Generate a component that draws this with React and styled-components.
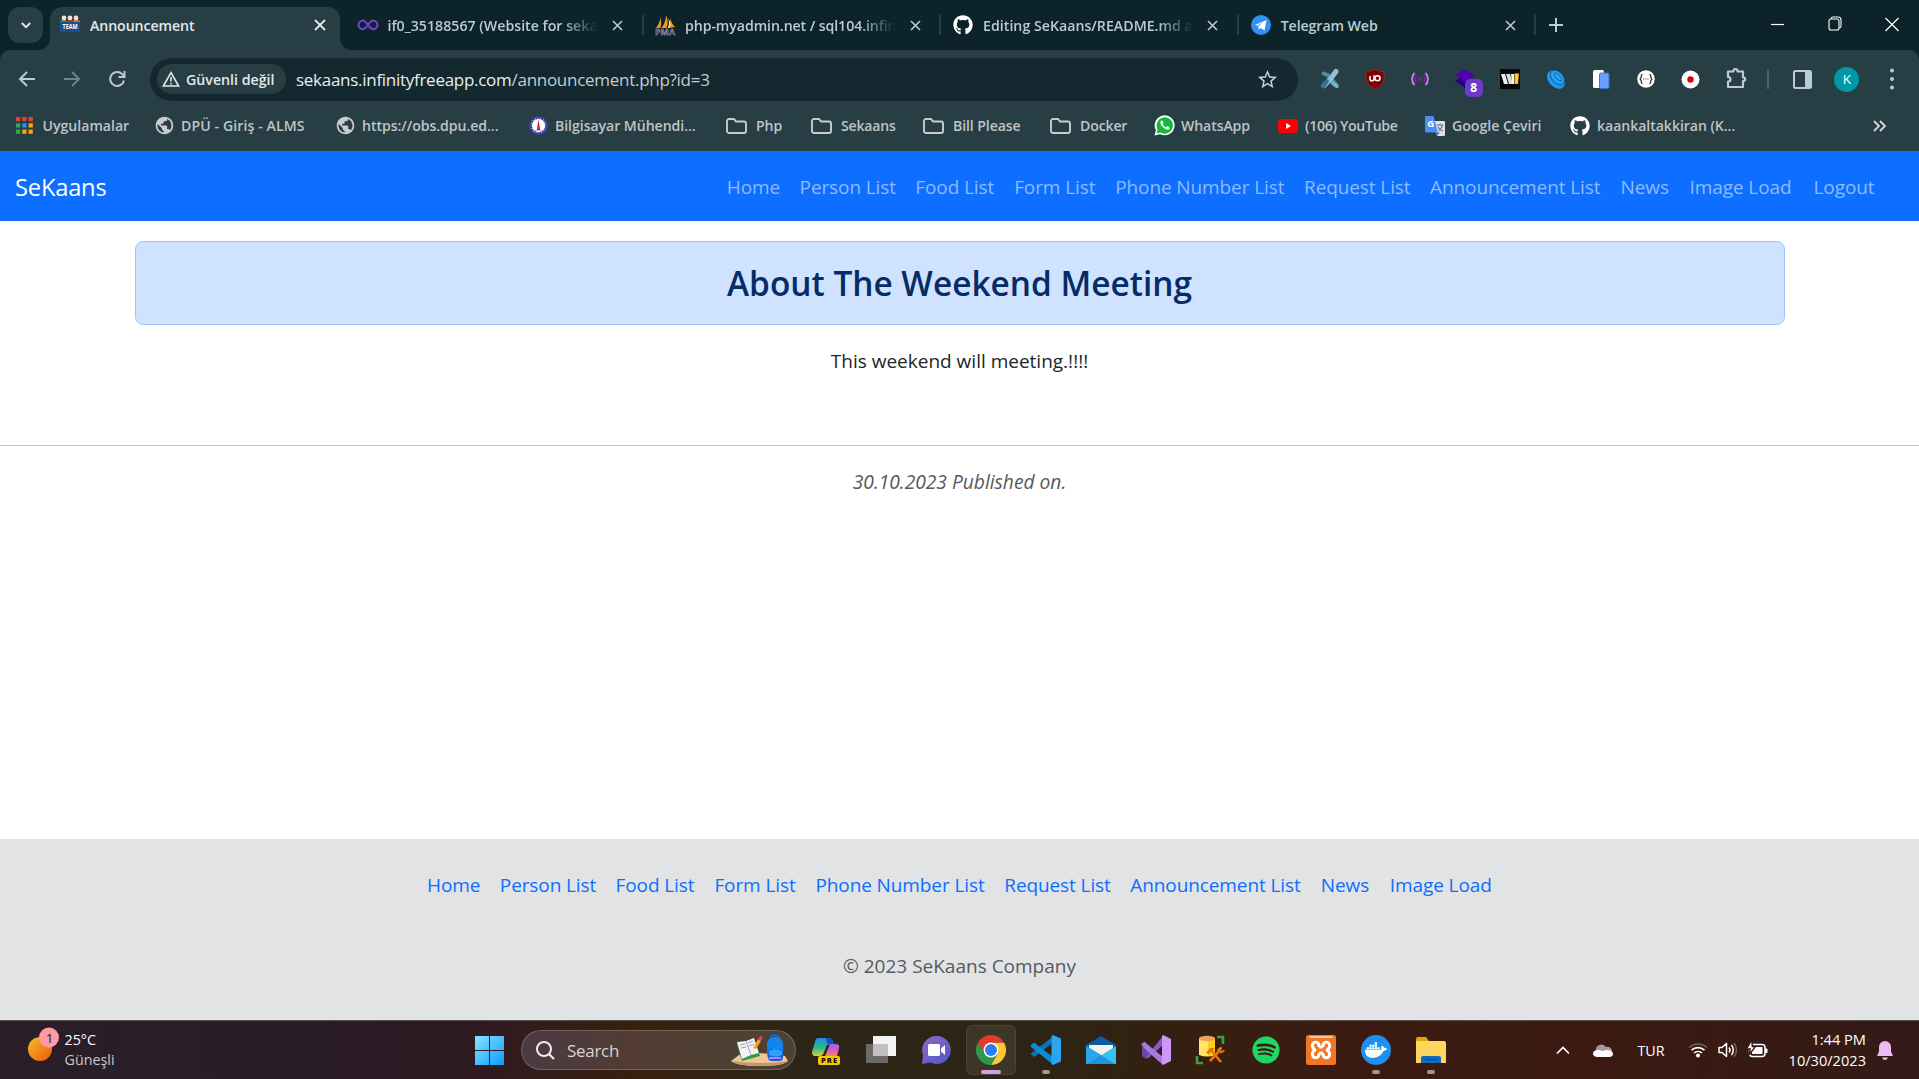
import React from "react";
import styled, { createGlobalStyle } from "styled-components";
import { FaGithub, FaSpotify, FaDocker } from "react-icons/fa6";
import { MdPublic, MdStarOutline } from "react-icons/md";

const GlobalStyle = createGlobalStyle`
  *, *::before, *::after { box-sizing: border-box; }
  body { margin: 0; overflow: hidden; background: #fff; font-family: "Open Sans", "Noto Sans", sans-serif; }
  svg { display: block; flex: none; overflow: visible; }
`;

const Screen = styled.div`
  width: 1919px;
  height: 1079px;
  display: flex;
  flex-direction: column;
  overflow: hidden;
`;

const Label = styled.span`
  white-space: nowrap;
  letter-spacing: ${(p) => p.$ls || 0}px;
`;

/* ---------- tab strip ---------- */
const TabStrip = styled.div`
  height: 50px;
  flex: none;
  display: flex;
  background: #0c2329;
  padding-left: 8px;
`;
const TabSearch = styled.div`
  width: 35px;
  height: 36px;
  margin: 7px 7px 0 0;
  border-radius: 12px;
  background: #283e45;
  display: grid;
  place-items: center;
`;
const Tab = styled.div`
  position: relative;
  width: ${(p) => p.$w}px;
  height: 43px;
  margin-top: 7px;
  padding: 0 13px 7px ${(p) => p.$pad}px;
  display: flex;
  align-items: center;
  color: ${(p) => (p.$active ? "#e3e9eb" : "#b8cdd3")};
  background: ${(p) => (p.$active ? "#283e45" : "transparent")};
  border-radius: 12px 12px 0 0;
  font-size: 14.2px;
  font-weight: 600;
  &::before, &::after {
    content: "";
    display: ${(p) => (p.$active ? "block" : "none")};
    position: absolute;
    bottom: 0;
    width: 12px;
    height: 12px;
  }
  &::before { left: -12px; background: radial-gradient(circle at 0 0, transparent 11.5px, #283e45 12.5px); }
  &::after { right: -12px; background: radial-gradient(circle at 100% 0, transparent 11.5px, #283e45 12.5px); }
`;
const TabTitle = styled.div`
  flex: none;
  width: ${(p) => p.$w}px;
  margin-left: 10px;
  padding-top: 1px;
  white-space: nowrap;
  line-height: 22px;
  letter-spacing: ${(p) => p.$ls || 0}px;
  ${(p) => p.$fade && "mask-image: linear-gradient(90deg, #000 82%, transparent 99%);"}
`;
const CloseSlot = styled.div`
  margin-left: auto;
  padding-right: ${(p) => p.$pad}px;
`;
const TabRule = styled.div`
  width: 2px;
  height: 20px;
  margin-top: 15px;
  background: #283e45;
`;
const NewTab = styled.div`
  margin: 18px 0 0 13px;
`;
const WindowControls = styled.div`
  margin-left: auto;
  display: flex;
  gap: 43px;
  padding: 16px 20.5px 0 0;
`;

/* ---------- toolbar ---------- */
const ToolbarBack = styled.div`
  flex: none;
  background: #0c2329;
`;
const Toolbar = styled.div`
  height: 58px;
  display: flex;
  align-items: center;
  background: #283e45;
  border-radius: 10px 10px 0 0;
  padding-left: 17px;
  color: #b8cdd3;
`;
const NavIcons = styled.div`
  display: flex;
  gap: 25px;
  width: 133px;
`;
const Omnibox = styled.div`
  width: 1148px;
  height: 43px;
  border-radius: 22px;
  background: #13292f;
  display: flex;
  align-items: center;
  padding: 0 19px 0 7px;
  font-size: 17px;
`;
const SecurityChip = styled.div`
  width: 129px;
  height: 30px;
  border-radius: 15px;
  background: #283e45;
  display: flex;
  align-items: center;
  gap: 6px;
  padding-left: 5px;
  margin-right: 10px;
  color: #e3e9eb;
  font-size: 14.2px;
  font-weight: 600;
`;
const Url = styled.div`
  flex: 1;
  white-space: nowrap;
  letter-spacing: ${(p) => p.$ls}px;
  color: #c3ccd0;
`;
const Host = styled.span`
  color: #e9eef0;
`;
const Extensions = styled.div`
  display: flex;
  align-items: center;
  padding-left: 9.5px;
`;
const ExtSlot = styled.div`
  position: relative;
  width: 45.1px;
  display: grid;
  place-items: center;
`;
const CountBadge = styled.div`
  position: absolute;
  left: 22px;
  top: 10px;
  width: 18px;
  height: 18px;
  border-radius: 5px;
  background: #6c3bc6;
  color: #fff;
  font-size: 12px;
  font-weight: 700;
  line-height: 18px;
  text-align: center;
`;
const ToolbarRule = styled.div`
  width: 2px;
  height: 20px;
  margin: 0 23.5px 0 9px;
  background: #4a626a;
`;
const Avatar = styled.div`
  width: 25px;
  height: 25px;
  margin: 0 31px 0 22.5px;
  border-radius: 50%;
  background: #0097a7;
  color: #fff;
  font-size: 13.5px;
  line-height: 25px;
  text-align: center;
`;

/* ---------- bookmarks ---------- */
const Bookmarks = styled.div`
  flex: none;
  height: 43px;
  background: #283e45;
  display: flex;
  padding: 0 0 8px 16px;
  align-items: center;
  font-size: 14.1px;
  font-weight: 600;
  color: #bfc5c7;
`;
const Bookmark = styled.div`
  display: flex;
  align-items: center;
  width: ${(p) => p.$w}px;
`;
const BookmarkIcon = styled.div`
  flex: none;
  width: ${(p) => p.$w}px;
`;

/* ---------- web page ---------- */
const Navbar = styled.nav`
  flex: none;
  height: 70px;
  background: #0d6eff;
  display: flex;
  align-items: center;
  padding: 1px 33px 0 15px;
`;
const Brand = styled.a`
  color: #fff;
  font-size: 23.7px;
  letter-spacing: -0.2px;
  white-space: nowrap;
`;
const NavLinks = styled.div`
  display: flex;
  margin-left: auto;
`;
const NavItem = styled.a`
  width: ${(p) => p.$w}px;
  white-space: nowrap;
  text-align: center;
  font-size: 19px;
  line-height: 30px;
  letter-spacing: -0.1px;
  color: ${(p) => (p.$footer ? "#0d6efd" : "#8ebbff")};
`;
const Main = styled.main`
  flex: 1;
  text-align: center;
  padding-top: 20px;
`;
const Alert = styled.div`
  width: 1650px;
  height: 84px;
  margin: 0 auto 21px;
  border: 1px solid #9ec5fe;
  border-radius: 8px;
  background: #cfe2ff;
  color: #052c65;
  font-size: 33.4px;
  font-weight: 600;
  line-height: 83px;
`;
const Message = styled.p`
  margin: 0;
  height: 99px;
  font-size: 19px;
  line-height: 31px;
  color: #212529;
`;
const Rule = styled.hr`
  margin: 0;
  border: 0;
  height: 1px;
  background: #c4c6c7;
`;
const Published = styled.p`
  margin: 20px 0 0;
  font-size: 19.2px;
  line-height: 31px;
  font-style: italic;
  color: #55595c;
`;
const Footer = styled.footer`
  flex: none;
  height: 181px;
  background: #e2e3e5;
`;
const FooterLinks = styled.div`
  height: 96px;
  display: flex;
  justify-content: center;
  padding-top: 31px;
  border-bottom: 1px solid #dfe0e4;
`;
const Copyright = styled.div`
  padding-top: 16px;
  text-align: center;
  font-size: 19px;
  line-height: 31px;
  color: #56595d;
`;

/* ---------- taskbar ---------- */
const Taskbar = styled.div`
  flex: none;
  height: 59px;
  display: flex;
  border-top: 1px solid #55504e;
  color: #fff;
  background: linear-gradient(90deg, #291e29 0, #2a1d27 310px, #2f1a22 470px, #38200f 640px, #2d2516 790px, #2c2515 1020px, #342011 1180px, #3b1b11 1340px, #3c1a11 1600px, #331a18 1919px);
`;
const Weather = styled.div`
  width: 475px;
  height: 58px;
  display: flex;
  padding: 7px 0 0 28px;
`;
const WeatherIcon = styled.div`
  width: 36.5px;
`;
const WeatherText = styled.div`
  font-size: 14.3px;
  line-height: 20.3px;
  padding-top: 1.5px;
  white-space: nowrap;
`;
const Muted = styled.div`
  color: #cdc8cc;
`;
const StartSlot = styled.div`
  width: 46px;
  padding-top: 15px;
`;
const SearchBox = styled.div`
  width: 275px;
  height: 40px;
  margin-top: 9px;
  border-radius: 20px;
  border: 1px solid rgba(255, 255, 255, 0.2);
  background: linear-gradient(90deg, #4a3a43, #523c33 40%, #4a4333);
  display: flex;
  align-items: center;
  padding: 0 7px 0 14px;
  font-size: 17px;
  letter-spacing: -0.3px;
  color: #d9d3d2;
`;
const SearchLabel = styled.span`
  flex: 1;
  padding-left: 12px;
`;
const TaskApps = styled.div`
  display: flex;
  padding: 4px 0 0 2.5px;
`;
const AppSlot = styled.div`
  width: 50px;
  height: 50px;
  margin: 0 2.5px;
  border-radius: 6px;
  display: flex;
  flex-direction: column;
  align-items: center;
  padding-top: 10px;
  background: ${(p) => (p.$active ? "rgba(255,255,255,0.08)" : "transparent")};
  box-shadow: ${(p) => (p.$active ? "inset 0 0 0 1px rgba(255,255,255,0.07)" : "none")};
`;
const Indicator = styled.div`
  width: ${(p) => (p.$active ? 20 : 8)}px;
  height: 4px;
  margin-top: 5px;
  border-radius: 2px;
  background: ${(p) => (p.$active ? "#d79ce2" : "#a09896")};
`;
const Tray = styled.div`
  margin-left: auto;
  display: flex;
  align-items: center;
  font-size: 14.3px;
  padding-right: 26px;
`;
const TrayItem = styled.div`
  width: ${(p) => p.$w}px;
`;
const Clock = styled.div`
  width: 98px;
  margin-right: 11px;
  text-align: right;
  font-size: 14.6px;
  line-height: 20.3px;
  padding-bottom: 1px;
`;

/* ---------- drawings ---------- */
const Svg = ({ w, h = w, vb, children, ...rest }) => (
  <svg width={w} height={h} viewBox={vb || `0 0 ${w} ${h}`} fill="none" {...rest}>{children}</svg>
);
const CloseIcon = ({ s = 9 }) => (
  <Svg w={s} vb="0 0 10 10"><path d="M0 0l10 10M10 0L0 10" stroke="currentColor" strokeWidth="1.8" /></Svg>
);
const TeamIcon = () => (
  <Svg w={20}>
    <path d="M1 6.500q3-3.500 6 0z" fill="#2fa84f" /><path d="M7 6.500q3-3.500 6 0z" fill="#d9241f" /><path d="M13 6.500q3-3.500 6 0z" fill="#ef7a30" />
    <circle cx="4" cy="3" r="2.400" fill="#f5ddd0" /><circle cx="10" cy="3" r="2.400" fill="#f5ddd0" /><circle cx="16" cy="3" r="2.400" fill="#f5ddd0" />
    <path d="M0 5.500h6.700v1.800H0z" fill="#2fa84f" /><path d="M6.700 5.500h6.600v1.800H6.700z" fill="#d9241f" /><path d="M13.300 5.500H20v1.800h-6.700z" fill="#ef7a30" />
    <path d="M0 6.800h20V17H0z" fill="#1d4f86" />
    <text x="10" y="14.300" textAnchor="middle" textLength="15" lengthAdjust="spacingAndGlyphs" fontSize="6.500" fontWeight="700" fill="#fff">TEAM</text>
  </Svg>
);
const InfinityIcon = () => (
  <Svg w={20}><path d="M10 10C7.500 6.500 6.500 5.700 4.800 5.700a4.200 4.200 0 0 0 0 8.400c1.700 0 2.700-.800 5.200-4.200s3.500-4.200 5.200-4.200a4.200 4.200 0 0 1 0 8.400c-1.700 0-2.700-.800-5.200-4.100z" stroke="#6c3fc4" strokeWidth="2.300" /></Svg>
);
const PmaIcon = () => (
  <Svg w={20}>
    <path d="M5.500 2Q7 8 5.500 13H1Q5 8 5.500 2zM11 0Q14 7 11.500 13H6.500Q11 7 11 0zM15 2Q16 8 20 12l-7 1Q16 7 15 2z" fill="#f09a22" />
    <path d="M12.500 3q3 5 0 10h2q3-5-2-10z" fill="#ffd58a" />
    <text x="10" y="20" textAnchor="middle" fontSize="8" fontWeight="700" textLength="20" lengthAdjust="spacingAndGlyphs" fill="#3c3b63" stroke="#b9b9cf" strokeWidth=".35">PMA</text>
  </Svg>
);
const TelegramIcon = () => (
  <Svg w={20}><circle cx="10" cy="10" r="10" fill="#3390ec" /><path d="M4 10l11.500-5-2 10.500-4-2.500-1.800 1.700-.3-3.300 4.500-4.200-5.500 3.500z" fill="#fff" /></Svg>
);
const Arrow = ({ back }) => (
  <Svg w={20} color={back ? "#b8cdd3" : "#6f848b"}>
    <path d={back ? "M18 10H3.500M10 3l-7 7 7 7" : "M2 10h14.500M10 3l7 7-7 7"} stroke="currentColor" strokeWidth="2" />
  </Svg>
);
const ReloadIcon = () => (
  <Svg w={20}><path d="M17 11.500A7 7 0 1 1 15.200 5.100L17 7" stroke="currentColor" strokeWidth="2" /><path d="M17.500 2v6h-6" stroke="currentColor" strokeWidth="2" /></Svg>
);
const WarnIcon = () => (
  <Svg w={18} h={16}><path d="M9 1.700L1.400 15h15.200z" stroke="#e3e9eb" strokeWidth="1.600" /><path d="M9 6v4.500M9 11.700v1.700" stroke="#e3e9eb" strokeWidth="1.600" /></Svg>
);
const AppsIcon = () => (
  <Svg w={17}>
    {["#ea4335", "#ea4335", "#ea4335", "#34a853", "#1a9bf0", "#fbaa05", "#34a853", "#fbaa05", "#fbaa05"].map((c, i) => (
      <rect key={i} x={(i % 3) * 6.3} y={Math.floor(i / 3) * 6.3} width="4.200" height="4.200" fill={c} />
    ))}
  </Svg>
);
const FolderIcon = () => (
  <Svg w={21} h={16}><path d="M1 3a2 2 0 0 1 2-2h5l2 2.500h8a2 2 0 0 1 2 2V13a2 2 0 0 1-2 2H3a2 2 0 0 1-2-2z" stroke="#c9cccd" strokeWidth="1.900" /></Svg>
);
const SealIcon = () => (
  <Svg w={19}><circle cx="9.500" cy="9.500" r="8" fill="#fff" stroke="#3b3fa5" strokeWidth="3" strokeDasharray="2.500 .6" /><path d="M9.500 3.500l1.800 11H7.700z" fill="#d31f2a" /><path d="M6 14.500h7" stroke="#b9b9d5" /></Svg>
);
const WhatsIcon = () => (
  <Svg w={21}><path d="M.5 20.500l1.400-5.300A10 10 0 1 1 6 19.200z" fill="#fff" /><path d="M2.500 18.500l1.100-4A8.200 8.200 0 1 1 6.500 17.500z" fill="#17b93c" /><path d="M7.300 5.500c-1.800 1-.9 4.200 1.800 6.700s5.600 3.200 6.400 1.200c.4-1.300-1-1.700-2-2.100-.8-.3-1 1-1.700.9-1.300-.5-2.600-1.800-3-3 0-.6 1-.9.700-1.700s-1-2.500-2.200-2z" fill="#fff" /></Svg>
);
const YoutubeIcon = () => (
  <Svg w={20} h={14}><rect width="20" height="14" rx="4" fill="#f00" /><path d="M8 4l5 3-5 3z" fill="#fff" /></Svg>
);
const TranslateIcon = () => (
  <Svg w={20}>
    <path d="M8 5h11a1 1 0 0 1 1 1v13a1 1 0 0 1-1 1h-7z" fill="#dfe1e4" /><path d="M11 16.500h4l-3 3.500z" fill="#3a6bd0" />
    <path d="M11.500 9h7M15 7.500V9M17.500 9c-.5 3-3 5-4 5.500M13 11c1 2 3 3.500 5 4" stroke="#6a7076" strokeWidth="1.100" />
    <path d="M1 0h7.500L13 16.500H1a1 1 0 0 1-1-1V1a1 1 0 0 1 1-1z" fill="#4f8df5" />
    <text x="5.800" y="11" textAnchor="middle" fontSize="9.500" fontWeight="700" fill="#fff">G</text>
  </Svg>
);
const CrossExt = () => (
  <Svg w={20}><path d="M3.500 4.500l4 1.500 9 10" stroke="#4a8fa8" strokeWidth="4" strokeLinecap="round" /><path d="M16 2.500C13 7 8 13 4 16.500" stroke="#8fc1d6" strokeWidth="5" strokeLinecap="round" /><path d="M7 12l-4 5.500" stroke="#2f718f" strokeWidth="4" strokeLinecap="round" /><path d="M12.500 14l4.500 3.500" stroke="#76b2c9" strokeWidth="3.500" strokeLinecap="round" /></Svg>
);
const ShieldExt = () => (
  <Svg w={20}><path d="M10 0c2.500 1.700 5.500 2.500 9 2.500V9c0 5-4 8.500-9 11C5 17.500 1 14 1 9V2.500C4.500 2.500 7.500 1.700 10 0z" fill="#800000" stroke="#9c3b3d" strokeWidth=".6" /><path d="M5 7v3q0 1.800 2 1.800t2-1.800V6.200v5" stroke="#fff" strokeWidth="1.500" /><circle cx="12.500" cy="9.200" r="2.500" stroke="#fff" strokeWidth="1.500" /></Svg>
);
const SignalExt = () => (
  <Svg w={18}><circle cx="9" cy="9" r="2" fill="#7d1fa8" /><path d="M5.500 5.500a5 5 0 0 0 0 7M12.500 5.500a5 5 0 0 1 0 7" stroke="#7d1fa8" strokeWidth="1.800" /><path d="M3.500 3a8.500 8.500 0 0 0 0 12M14.500 3a8.500 8.500 0 0 1 0 12" stroke="#c583de" strokeWidth="1.900" /></Svg>
);
const LayersExt = () => (
  <Svg w={20}><path d="M10 6l10 7-10 6L0 12z" fill="#270081" /><path d="M10 0l10 7-10 6L0 6z" fill="#4d00b0" /></Svg>
);
const WExt = () => (
  <Svg w={20}><rect width="20" height="20" fill="#060606" /><path d="M1 5h4l3 10H4z" fill="#eee" /><path d="M6 5h4l3 10H9z" fill="#ddd" /><path d="M11 5h3v10h-2z" fill="#f5f5f5" /><path d="M14.500 4.500H19L18 15h-3.500z" fill="#fbc52c" /></Svg>
);
const DishExt = () => (
  <Svg w={20}><ellipse cx="10" cy="10.500" rx="7.500" ry="10.500" transform="rotate(-43 10 10.500)" fill="#2196f3" /><ellipse cx="11.500" cy="8.500" rx="5.500" ry="8.500" transform="rotate(-43 11.500 8.500)" fill="#22a7f7" stroke="#0f4f8c" strokeWidth=".9" /><ellipse cx="12" cy="8" rx="2.200" ry="5.200" transform="rotate(-43 12 8)" stroke="#0f4f8c" strokeWidth=".8" /></Svg>
);
const DevicesExt = () => (
  <Svg w={18} h={20}><rect x="1" y="1" width="11" height="18" rx="1.500" fill="#fff" /><rect x="7.500" y="4" width="9.500" height="15.500" rx="1.500" fill="#66a2fb" stroke="#3b71cf" strokeWidth="1" /></Svg>
);
const BracesExt = () => (
  <Svg w={20}><circle cx="10" cy="10" r="9.300" fill="#fff" stroke="#20282b" strokeWidth="1" /><path d="M6.700 5.500q-1.500 0-1.500 1.500v1.500L4 10l1.200 1.500V13q0 1.500 1.500 1.500M13.300 5.500q1.500 0 1.500 1.500v1.500L16 10l-1.200 1.500V13q0 1.500-1.500 1.500" stroke="#222" strokeWidth="1.200" /><path d="M7 10h6" stroke="#555" strokeWidth="1.200" strokeDasharray="1.200 1" /></Svg>
);
const RecExt = () => (
  <Svg w={19}><circle cx="9.500" cy="9.500" r="9" fill="#fff" /><circle cx="9.500" cy="9.500" r="3.200" fill="#e80000" /></Svg>
);
const PanelIcon = () => (
  <Svg w={19}><rect x="1" y="1" width="17" height="17" rx="1.500" stroke="currentColor" strokeWidth="2" /><path d="M12 1h6v17h-6z" fill="currentColor" /></Svg>
);
const PuzzleIcon = () => (
  <Svg w={22}><path d="M3 3.500h5.500V3a2 2 0 0 1 4 0v.5H18v6h.5a1.700 1.700 0 0 1 0 3.400H18V19H3v-5.300a2.200 2.200 0 0 0 0-4.800z" stroke="currentColor" strokeWidth="2.200" strokeLinejoin="round" /></Svg>
);
const StartIcon = () => (
  <Svg w={29}>
    <defs><linearGradient id="win" x1="0" y1="0" x2="1" y2="1"><stop stopColor="#8ae4ff" /><stop offset="1" stopColor="#0c9bff" /></linearGradient></defs>
    <path d="M0 0h14v14H0zM15 0h14v14H15zM0 15h14v14H0zM15 15h14v14H15z" fill="url(#win)" />
  </Svg>
);
const SchoolIcon = () => (
  <Svg w={57} h={31}>
    <path d="M0 26L8 20q22-4 46 1l3 5q-5 5-28 5T0 26z" fill="#f0c597" /><path d="M0 26q30 4 57 0-5 5-28 5T0 26z" fill="#c99767" />
    <path d="M6 9l17-4 6 16-18 5z" fill="#2f9d43" /><path d="M6 7l9-1 8-3 5 15-8 2-9 4z" fill="#f3f1f5" /><path d="M15 6l5 14M9 10l5-1M10 13l5-1M17 8l5-2M18 11l5-2" stroke="#a6a1b5" strokeWidth="1" />
    <path d="M22 13l5-9 3 2-5 8z" fill="#f6a623" /><path d="M27 4l2-3 3 1-2 4z" fill="#e8413c" />
    <path d="M40 3q0-3 4-3t4 3" stroke="#1265d8" strokeWidth="2" /><rect x="36" y="2" width="16" height="24" rx="7" fill="#1583ef" /><rect x="37" y="14" width="15" height="12" rx="4" fill="#0f5fd2" /><path d="M38 16q6-4 13 0v4q-6 3-13 0z" fill="#2ba0ff" /><path d="M38 23h12" stroke="#b583f5" strokeWidth="2" />
  </Svg>
);
const CopilotIcon = () => (
  <Svg w={30}>
    <defs>
      <linearGradient id="cpa" x1="0" y1="0" x2="0" y2="1"><stop stopColor="#1e8fe8" /><stop offset=".55" stopColor="#2fb88b" /><stop offset="1" stopColor="#d9d43a" /></linearGradient>
      <linearGradient id="cpb" x1="0" y1="0" x2="0" y2="1"><stop stopColor="#9a62f0" /><stop offset=".6" stopColor="#e45bb5" /><stop offset="1" stopColor="#f58a5c" /></linearGradient>
    </defs>
    <path d="M7 3h10q4 0 5 4l1 3h-7l-3 7q-1 4-4 4H4q-3 0-3-4L4 7q1-4 3-4z" fill="url(#cpa)" />
    <path d="M15 3h2q4 0 5 4l1 3h-6q-2-4-2-7z" fill="#1a4fc0" />
    <path d="M19 9h6q4 0 3 4l-2 8H14z" fill="url(#cpb)" />
    <rect x="7" y="21" width="22" height="9" rx="2" fill="#fdc500" />
    <text x="18" y="28.300" textAnchor="middle" fontSize="7.500" fontWeight="800" textLength="16" fill="#111">PRE</text>
  </Svg>
);
const TaskViewIcon = () => (
  <Svg w={30}><rect x="0" y="9" width="22" height="19" fill="#6c6a67" /><rect x="7" y="1" width="23" height="20" fill="#f3f3f2" /><path d="M7 9h15v12H7z" fill="#c2c1bf" /></Svg>
);
const ChatIcon = () => (
  <Svg w={30}>
    <defs><linearGradient id="chat" x1="0" y1="0" x2="1" y2="1"><stop stopColor="#9069c4" /><stop offset="1" stopColor="#4c58c8" /></linearGradient></defs>
    <path d="M15.500 1a14 14 0 1 1-6 26.500L1 29l1-9A14 14 0 0 1 15.500 1z" fill="url(#chat)" /><rect x="7" y="9" width="12" height="12" rx="1.500" fill="#fff" /><path d="M20 13.500l4-3.500v10l-4-3.500z" fill="#fff" />
  </Svg>
);
const ChromeIcon = () => (
  <Svg w={30} vb="0 0 48 48">
    <path d="M24 12h20.800A24 24 0 0 1 24 48l10.400-18z" fill="#fcc934" /><path d="M13.600 30L3.200 12A24 24 0 0 0 24 48l10.400-18z" fill="#2a9a4a" /><path d="M3.200 12A24 24 0 0 1 44.800 12H24v12L13.600 30z" fill="#e33b2e" />
    <circle cx="24" cy="24" r="12" fill="#fff" /><circle cx="24" cy="24" r="9.500" fill="#2f7cf0" />
  </Svg>
);
const VscodeIcon = () => (
  <Svg w={30}><path d="M22 1.500v6L3.500 22 0 19.500v-1z" fill="#0277bd" /><path d="M0 10l3-2.500L22 22v7.500L0 12z" fill="#0d8ad4" /><path d="M22 0l8 3.500v23L22 30l-1.500-1V1z" fill="#2aa5f2" /></Svg>
);
const MailIcon = () => (
  <Svg w={30}><path d="M0 10L15 1l15 9v5H0z" fill="#0a5aa8" /><path d="M3 10h24v10H3z" fill="#f2f2f2" /><path d="M0 11l30 18H1a1 1 0 0 1-1-1z" fill="#1c93e6" /><path d="M30 11L15 20.500 29 29h1z" fill="#35c1f1" /><path d="M0 11l15 9.500L1 29H0z" fill="#28a8ea" /></Svg>
);
const VsIcon = () => (
  <Svg w={30}><path d="M1 8.500L4 7l5 5v6l-5 5-3-1.500z" fill="#6a4aa0" /><path d="M5 22L22 1v9L8 22.500l-4 1.500z" fill="#8659c4" /><path d="M0 9l3.500-2L22 22v8L5 15z" fill="#a77ade" /><path d="M22 0l8 4v22l-8 4-1-1V1z" fill="#cc96fb" /></Svg>
);
const SqlIcon = () => (
  <Svg w={30}>
    <path d="M3 3h16v17q-8 3-16 0z" fill="#ffe36b" /><path d="M12 3h7v17q-3 1-7 1z" fill="#fcd017" /><ellipse cx="11" cy="3.500" rx="8" ry="2.700" fill="#efa254" />
    <path d="M21 2h6v7M1 21v7h6" stroke="#3f9b45" strokeWidth="2.600" />
    <path d="M14 26l11-12M14 14l11 13" stroke="#e87410" strokeWidth="2.600" /><path d="M10 18l4-5h5l-6 6z" fill="#e87410" /><path d="M22 17q0-4 4-4M24 17q3 1 4-2" stroke="#e87410" strokeWidth="2" />
  </Svg>
);
const XamppIcon = () => (
  <Svg w={30}>
    <rect width="30" height="30" rx="2.500" fill="#f37623" /><path d="M3.500 2h23" stroke="#fbc39c" strokeWidth="2" />
    <path d="M13 12v-1.500a3.300 3.300 0 0 0-6.600 0q0 3 2.600 4.500-2.600 1.500-2.600 4.500a3.300 3.300 0 0 0 6.600 0V18M17 12v-1.500a3.300 3.300 0 0 1 6.600 0q0 3-2.600 4.500 2.600 1.500 2.600 4.500a3.300 3.300 0 0 1-6.600 0V18M13 12h4M13 18h4" stroke="#fff" strokeWidth="3" strokeLinejoin="round" />
  </Svg>
);
const DockerDisc = styled.div`
  width: 30px;
  height: 30px;
  display: grid;
  place-items: center;
  border-radius: 50%;
  background: #1d8ff0;
  color: #fff;
`;
const ExplorerIcon = () => (
  <Svg w={30}><path d="M0 4q0-2 2-2h8l3 4v6H0z" fill="#e5a50a" /><path d="M0 6h28q2 0 2 2v20H0z" fill="#fdd65b" /><path d="M5 28v-5q0-2 2-2h16q2 0 2 2v5z" fill="#0f6cbd" /><path d="M9 24.500h12" stroke="#0a4a8a" strokeWidth="1.300" /></Svg>
);
const WeatherDrawing = () => (
  <Svg w={32} h={36}>
    <defs><linearGradient id="sun" x1="0" y1="0" x2="1" y2="1"><stop stopColor="#f3bd2b" /><stop offset="1" stopColor="#ee5a0a" /></linearGradient></defs>
    <circle cx="12" cy="21" r="12" fill="url(#sun)" /><circle cx="21" cy="9.500" r="10" fill="#ff99a4" />
    <text x="21.500" y="14.500" textAnchor="middle" fontSize="13.500" fill="#1d1518">1</text>
  </Svg>
);
const WifiIcon = () => (
  <Svg w={20} h={16}><path d="M1 5.500a13 13 0 0 1 18 0" stroke="#786057" strokeWidth="1.500" /><path d="M3.500 8.200a9.500 9.500 0 0 1 13 0M6 11a6 6 0 0 1 8 0" stroke="#fff" strokeWidth="1.600" /><circle cx="10" cy="13.500" r="2" fill="#fff" /></Svg>
);
const SpeakerIcon = () => (
  <Svg w={20} h={16}><path d="M1 5.500h3L8.500 1.500v13L4 10.500H1z" stroke="#fff" strokeWidth="1.500" strokeLinejoin="round" /><path d="M11 5.500q2 2.500 0 5M13.500 3q3.500 5 0 10" stroke="#fff" strokeWidth="1.500" /><path d="M16 1q5 7 0 14" stroke="#786057" strokeWidth="1.500" /></Svg>
);
const BatteryIcon = () => (
  <Svg w={20} h={17}><rect x="1.500" y="2.500" width="15.500" height="12" rx="3" stroke="#fff" strokeWidth="1.500" /><rect x="4" y="5" width="10.500" height="7" fill="#fff" /><path d="M17.500 7h1.500v3.500h-1.500z" fill="#fff" stroke="#fff" /><path d="M3.800-2L-1.500 7h3.700l-1.400 6L7.500 4.500H4.300z" fill="#fff" stroke="#3b1b11" strokeWidth="1.400" /></Svg>
);
const BellIcon = () => (
  <Svg w={16} h={19}><path d="M8 0a6 6 0 0 1 6 6v4.500l2 4.500H0l2-4.500V6a6 6 0 0 1 6-6z" fill="#efb9f2" /><path d="M5 16.500h6q-1 2.500-3 2.500t-3-2.500z" fill="#efb9f2" /></Svg>
);

/* ---------- data ---------- */
const tabs = [
  { icon: <InfinityIcon />, title: "if0_35188567 (Website for seka", w: 301.5, pad: 17.5, ls: 0 },
  { icon: <PmaIcon />, title: "php-myadmin.net / sql104.infin", w: 295.6, pad: 11.5, ls: -0.1 },
  { icon: <FaGithub size={20} color="#fff" />, title: "Editing SeKaans/README.md a", w: 295.6, pad: 12, ls: 0 },
  { icon: <TelegramIcon />, title: "Telegram Web", w: 295.6, pad: 12, ls: -0.1, whole: true },
];
const globe = <MdPublic size={21} color="#c9cccd" style={{ margin: "0 -1.5px" }} />;
const bookmarks = [
  [<AppsIcon />, 26.5, "Uygulamalar", 139, 0],
  [globe, 26, "DPÜ - Giriş - ALMS", 181, 0.1],
  [globe, 26, "https://obs.dpu.ed...", 193, -0.05],
  [<SealIcon />, 26, "Bilgisayar Mühendi...", 197, -0.05],
  [<FolderIcon />, 30, "Php", 85, -0.1],
  [<FolderIcon />, 30, "Sekaans", 112, -0.2],
  [<FolderIcon />, 30, "Bill Please", 127, -0.1],
  [<FolderIcon />, 30, "Docker", 104, -0.15],
  [<WhatsIcon />, 27, "WhatsApp", 124, -0.1],
  [<YoutubeIcon />, 27, "(106) YouTube", 147, -0.3],
  [<TranslateIcon />, 27, "Google Çeviri", 145, 0],
  [<FaGithub size={20} color="#fff" />, 27, "kaankaltakkiran (K...", 303, -0.05],
];
const links = [
  ["Home", 74], ["Person List", 114.5], ["Food List", 99.5], ["Form List", 100.5], ["Phone Number List", 189.5],
  ["Request List", 125.5], ["Announcement List", 190.5], ["News", 68.5], ["Image Load", 123], ["Logout", 84],
];
const extensions = [<CrossExt />, <ShieldExt />, <SignalExt />, <LayersExt />, <WExt />, <DishExt />, <DevicesExt />, <BracesExt />, <RecExt />, <PuzzleIcon />];
const apps = [
  { icon: <CopilotIcon /> }, { icon: <TaskViewIcon /> }, { icon: <ChatIcon /> },
  { icon: <ChromeIcon />, active: true, running: true },
  { icon: <VscodeIcon />, running: true }, { icon: <MailIcon /> }, { icon: <VsIcon /> }, { icon: <SqlIcon /> },
  { icon: <FaSpotify size={28} color="#1ed760" style={{ margin: 1 }} /> },
  { icon: <XamppIcon /> },
  { icon: <DockerDisc><FaDocker size={22} /></DockerDisc>, running: true },
  { icon: <ExplorerIcon />, running: true },
];

export default function App() {
  return (
    <Screen>
      <GlobalStyle />
      <TabStrip>
        <TabSearch><Svg w={10} h={7}><path d="M.8 1l4.200 4.200L9.200 1" stroke="#e3e9eb" strokeWidth="2" /></Svg></TabSearch>
        <Tab $active $w={290} $pad={10}>
          <TeamIcon /><TabTitle $w={210} $ls={-0.1}>Announcement</TabTitle><CloseSlot $pad={2}><CloseIcon s={10} /></CloseSlot>
        </Tab>
        {tabs.map((t) => (
          <React.Fragment key={t.title}>
            <Tab $w={t.w} $pad={t.pad}>
              {t.icon}<TabTitle $w={212} $fade={!t.whole} $ls={t.ls}>{t.title}</TabTitle><CloseSlot $pad={6.5}><CloseIcon /></CloseSlot>
            </Tab>
            <TabRule />
          </React.Fragment>
        ))}
        <NewTab><Svg w={14}><path d="M7 0v14M0 7h14" stroke="#b8cdd3" strokeWidth="2" /></Svg></NewTab>
        <WindowControls>
          <Svg w={14}><path d="M0 8.500h13" stroke="#fff" strokeWidth="1.200" /></Svg>
          <Svg w={14}><rect x="1" y="3" width="10" height="11" rx="2" stroke="#fff" strokeWidth="1.100" /><path d="M3 2.500Q3.500 1 5 1h5q3 0 3 3v6q0 1.500-1.500 2" stroke="#fff" strokeWidth="1.100" /></Svg>
          <Svg w={14}><path d="M.5 2l13 13M13.500 2l-13 13" stroke="#fff" strokeWidth="1.200" /></Svg>
        </WindowControls>
      </TabStrip>
      <ToolbarBack>
        <Toolbar>
          <NavIcons><Arrow back /><Arrow /><ReloadIcon /></NavIcons>
          <Omnibox>
            <SecurityChip><WarnIcon /><Label>Güvenli değil</Label></SecurityChip>
            <Url $ls={-0.28}><Host>sekaans.infinityfreeapp.com</Host>/announcement.php?id=3</Url>
            <MdStarOutline size={23} color="#c3d0d5" />
          </Omnibox>
          <Extensions>
            {extensions.map((icon, i) => (
              <ExtSlot key={i}>{icon}{i === 3 && <CountBadge>8</CountBadge>}</ExtSlot>
            ))}
            <ToolbarRule />
            <PanelIcon />
          </Extensions>
          <Avatar>K</Avatar>
          <Svg w={4} h={22}><circle cx="2" cy="2.500" r="2" fill="#b8cdd3" /><circle cx="2" cy="11" r="2" fill="#b8cdd3" /><circle cx="2" cy="19.500" r="2" fill="#b8cdd3" /></Svg>
        </Toolbar>
      </ToolbarBack>
      <Bookmarks>
        {bookmarks.map(([icon, iw, text, w, ls]) => (
          <Bookmark key={text} $w={w}><BookmarkIcon $w={iw}>{icon}</BookmarkIcon><Label $ls={ls}>{text}</Label></Bookmark>
        ))}
        <Svg w={13} h={10}><path d="M1 0l5 5-5 5M7 0l5 5-5 5" stroke="#d5dadc" strokeWidth="1.800" /></Svg>
      </Bookmarks>

      <Navbar>
        <Brand>SeKaans</Brand>
        <NavLinks>{links.map(([t, w]) => <NavItem key={t} $w={w}>{t}</NavItem>)}</NavLinks>
      </Navbar>
      <Main>
        <Alert>About The Weekend Meeting</Alert>
        <Message>This weekend will meeting.!!!!</Message>
        <Rule />
        <Published>30.10.2023 Published on.</Published>
      </Main>
      <Footer>
        <FooterLinks>{links.slice(0, 9).map(([t, w]) => <NavItem key={t} $w={w} $footer>{t}</NavItem>)}</FooterLinks>
        <Copyright>© 2023 SeKaans Company</Copyright>
      </Footer>

      <Taskbar>
        <Weather>
          <WeatherIcon><WeatherDrawing /></WeatherIcon>
          <WeatherText><div>25°C</div><Muted>Güneşli</Muted></WeatherText>
        </Weather>
        <StartSlot><StartIcon /></StartSlot>
        <SearchBox>
          <Svg w={19}><circle cx="8" cy="8" r="7" stroke="#eee" strokeWidth="2" /><path d="M13 13l5 5" stroke="#eee" strokeWidth="2.200" /></Svg>
          <SearchLabel>Search</SearchLabel>
          <SchoolIcon />
        </SearchBox>
        <TaskApps>
          {apps.map((a, i) => (
            <AppSlot key={i} $active={a.active}>{a.icon}{a.running && <Indicator $active={a.active} />}</AppSlot>
          ))}
        </TaskApps>
        <Tray>
          <TrayItem $w={37}><Svg w={14} h={8}><path d="M1 7.500l6-6 6 6" stroke="#fff" strokeWidth="1.700" /></Svg></TrayItem>
          <TrayItem $w={44.5}><Svg w={20} h={13}><path d="M3 7a5.500 5.500 0 0 1 10-4 4.500 4.500 0 0 1 6 4l-6 3z" fill="#a89a96" /><path d="M4 6q3-.5 5 1l4-1q6-.5 7 3.500 0 3-3 3.500H4q-4-.5-4-3.500T4 6z" fill="#fff" /></Svg></TrayItem>
          <TrayItem $w={50.5}>TUR</TrayItem>
          <TrayItem $w={30}><WifiIcon /></TrayItem>
          <TrayItem $w={30}><SpeakerIcon /></TrayItem>
          <TrayItem $w={20}><BatteryIcon /></TrayItem>
          <Clock><div>1:44 PM</div><div>10/30/2023</div></Clock>
          <BellIcon />
        </Tray>
      </Taskbar>
    </Screen>
  );
}
